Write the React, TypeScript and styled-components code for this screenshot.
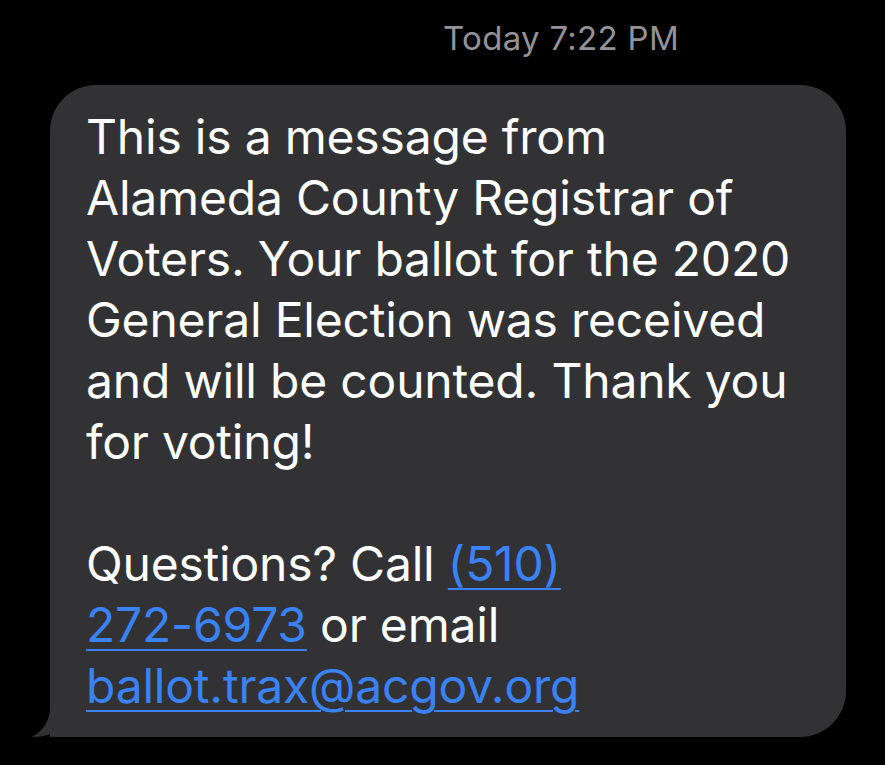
import React from 'react'
import styled, { createGlobalStyle } from 'styled-components'

const Global = createGlobalStyle`
  html, body {
    margin: 0;
    padding: 0;
    background: #000;
  }
  body {
    width: 885px;
    height: 765px;
    overflow: hidden;
  }
`

const Screen = styled.div`
  width: 885px;
  height: 765px;
  background: #000;
  display: flex;
  flex-direction: column;
  font-family: Inter, "Noto Sans", sans-serif;
`

const Stamp = styled.div`
  display: flex;
  justify-content: flex-end;
  padding: 17px 206px 0 0;
  height: 85px;
  box-sizing: border-box;
  color: #929297;
  font-size: 33px;
  line-height: 42px;
  letter-spacing: 0.3px;
`

const Row = styled.div`
  padding: 0 39px 0 50px;
`

const Bubble = styled.div`
  position: relative;
  z-index: 0;
  background: #323234;
  border-radius: 46px 46px 46px 0;
  padding: 21px 30px 21px 36px;
  color: #fff;
  font-size: 48px;
  line-height: 61px;
  letter-spacing: -0.2px;
`

// the little hook at the lower left corner, kept under the text
const Tail = styled.svg`
  position: absolute;
  z-index: -1;
  left: -18px;
  bottom: 0;
`

const Para = styled.p`
  margin: 0;
  white-space: nowrap;
`

const Gap = styled.div`
  height: 61px;
`

const Link = styled.a`
  color: #3a82f7;
  text-decoration: underline;
  text-decoration-thickness: 2px;
  text-underline-offset: 7px;
`

const App = () => {
  return (
    <Screen>
      <Global />
      <Stamp>Today 7:22 PM</Stamp>
      <Row>
        <Bubble>
          <Tail width="80" height="50" viewBox="0 0 80 50">
            <path
              d="M18 0 L18 20 C18 34 11 44 0 50 C11 50 23 47 33 39 C43 46 54 50 72 50 L80 50 L80 0 Z"
              fill="#323234"
            />
          </Tail>
          <Para>This is a message from</Para>
          <Para>Alameda County Registrar of</Para>
          <Para>Voters. Your ballot for the 2020</Para>
          <Para>General Election was received</Para>
          <Para>and will be counted. Thank you</Para>
          <Para>for voting!</Para>
          <Gap />
          <Para>Questions? Call <Link>(510)</Link></Para>
          <Para><Link>272-6973</Link> or email</Para>
          <Para><Link>ballot.trax@acgov.org</Link></Para>
        </Bubble>
      </Row>
    </Screen>
  )
}

export default App
